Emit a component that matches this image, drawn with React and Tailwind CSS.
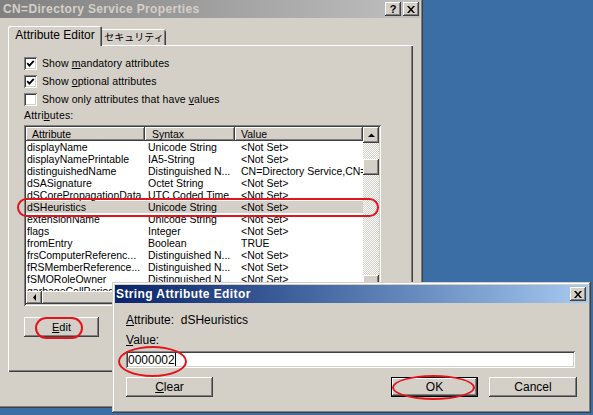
import React from 'react';

// Win2000 style bevels
const raised = 'bg-[#d4d0c8] shadow-[inset_-1px_-1px_#404040,inset_1px_1px_#ffffff,inset_-2px_-2px_#808080,inset_2px_2px_#d4d0c8]';
const sunken = 'shadow-[inset_1px_1px_#808080,inset_-1px_-1px_#ffffff,inset_2px_2px_#404040,inset_-2px_-2px_#d4d0c8]';
const windowFrame = 'bg-[#d4d0c8] shadow-[inset_-1px_-1px_#404040,inset_1px_1px_#d4d0c8,inset_-2px_-2px_#808080,inset_2px_2px_#ffffff]';
const checker = 'bg-[repeating-conic-gradient(#d4d0c8_0_25%,#ffffff_0_50%)] bg-[length:2px_2px]';

const CloseGlyph = () => (
  <svg width="8" height="7" viewBox="0 0 8 7">
    <path d="M0 0h2l2 2.4L6 0h2L5 3.5 8 7H6L4 4.6 2 7H0l3-3.5z" fill="#000" />
  </svg>
);

const TitleButton = ({ children }) => (
  <div className={`w-[16px] h-[14px] flex items-center justify-center ${raised}`}>{children}</div>
);

const Arrow = ({ dir }) => (
  <svg width="7" height="7" viewBox="0 0 7 7">
    {dir === 'up' && <path d="M3.5 1.5L7 5H0z" fill="#000" />}
    {dir === 'down' && <path d="M0 2h7L3.5 5.5z" fill="#000" />}
    {dir === 'left' && <path d="M2 3.5L5 0v7z" fill="#000" />}
  </svg>
);

const Checkbox = ({ checked, children }) => (
  <div className="flex items-center h-[13px] gap-[5px]">
    <div className={`w-[13px] h-[13px] bg-white ${sunken} flex items-center justify-center`}>
      {checked && (
        <svg width="13" height="13" viewBox="0 0 13 13">
          <polyline points="3.2,6.2 5.4,8.6 9.8,3.8" fill="none" stroke="#000" strokeWidth="1.8" />
        </svg>
      )}
    </div>
    <span className="text-[10.5px] leading-[13px] tracking-[0.1px]">{children}</span>
  </div>
);

const rows = [
  ['displayName', 'Unicode String', '<Not Set>'],
  ['displayNamePrintable', 'IA5-String', '<Not Set>'],
  ['distinguishedName', 'Distinguished N...', 'CN=Directory Service,CN=Windows NT'],
  ['dSASignature', 'Octet String', '<Not Set>'],
  ['dSCorePropagationData', 'UTC Coded Time', '<Not Set>'],
  ['dSHeuristics', 'Unicode String', '<Not Set>'],
  ['extensionName', 'Unicode String', '<Not Set>'],
  ['flags', 'Integer', '<Not Set>'],
  ['fromEntry', 'Boolean', 'TRUE'],
  ['frsComputerReferenc...', 'Distinguished N...', '<Not Set>'],
  ['fRSMemberReference...', 'Distinguished N...', '<Not Set>'],
  ['fSMORoleOwner', 'Distinguished N...', '<Not Set>'],
  ['garbageCollPeriod', 'Integer', '<Not Set>'],
];

export default function App() {
  return (
    <div className="relative w-[593px] h-[415px] overflow-hidden bg-[#3a6ea5] text-black font-['Liberation_Sans','Noto_Sans_CJK_JP',sans-serif]">
      {/* Properties window */}
      <div className={`absolute left-[-3px] top-[-3px] w-[426px] h-[411px] p-[3px] flex flex-col ${windowFrame}`}>
        <div className="h-[18px] flex items-center pl-[3px] pr-[1px] bg-linear-to-r from-[#808080] to-[#c0c0c0]">
          <span className="flex-1 text-[12px] font-bold tracking-[0.35px] text-[#d4d0c8] leading-[18px]">
            CN=Directory Service Properties
          </span>
          <TitleButton>
            <span className="text-[11px] font-bold leading-none">?</span>
          </TitleButton>
          <div className="w-[2px]" />
          <TitleButton>
            <CloseGlyph />
          </TitleButton>
        </div>

        <div className="flex-1 pl-[8px] pr-[7px] pt-[8px]">
          {/* tabs */}
          <div className="flex items-end h-[19px]">
            <div className="relative z-10 h-[20px] w-[94px] -mb-[1px] bg-[#d4d0c8] rounded-t-[2px] shadow-[inset_1px_1px_#ffffff,inset_-1px_0_#404040,inset_-2px_0_#808080] flex items-center justify-center pb-[2px] text-[12px]">
              Attribute Editor
            </div>
            <div className="h-[16px] w-[64px] rounded-tr-[2px] shadow-[inset_0_1px_#ffffff,inset_-1px_0_#404040,inset_-2px_0_#808080] flex items-center justify-center text-[10px]">
              セキュリティ
            </div>
          </div>

          {/* tab panel */}
          <div className="h-[327px] px-[16px] pt-[12px] shadow-[inset_1px_1px_#ffffff,inset_-1px_-1px_#404040,inset_-2px_-2px_#808080]">
            <Checkbox checked>
              Show <u>m</u>andatory attributes
            </Checkbox>
            <div className="mt-[5px]">
              <Checkbox checked>
                Show <u>o</u>ptional attributes
              </Checkbox>
            </div>
            <div className="mt-[5px]">
              <Checkbox>
                Show only attributes that have <u>v</u>alues
              </Checkbox>
            </div>
            <div className="mt-[3px] h-[12px] text-[10.5px] leading-[12px] tracking-[0.2px]">
              Attri<u>b</u>utes:
            </div>

            {/* list view */}
            <div className={`mt-[4px] w-[357px] h-[181px] bg-white p-[2px] flex flex-col ${sunken}`}>
              <div className="flex-1 flex min-h-0">
                <div className="flex-1 overflow-hidden">
                  <div className="h-[14px] flex text-[10.5px] leading-[14px] whitespace-nowrap">
                    <div className="w-[119px] pl-[6px] bg-[#d4d0c8] shadow-[inset_-1px_-1px_#404040,inset_1px_1px_#ffffff,inset_-2px_-2px_#808080]">Attribute</div>
                    <div className="w-[90px] pl-[7px] bg-[#d4d0c8] shadow-[inset_-1px_-1px_#404040,inset_1px_1px_#ffffff,inset_-2px_-2px_#808080]">Syntax</div>
                    <div className="flex-1 pl-[6px] bg-[#d4d0c8] shadow-[inset_-1px_-1px_#404040,inset_1px_1px_#ffffff,inset_-2px_-2px_#808080]">Value</div>
                  </div>
                  {rows.map(([a, s, v]) => (
                    <div
                      key={a}
                      className={`h-[12px] flex text-[10.5px] leading-[12px] whitespace-nowrap ${a === 'dSHeuristics' ? 'bg-[#d4d0c8]' : ''}`}
                    >
                      <div className="w-[119px] pl-[1px] overflow-hidden">{a}</div>
                      <div className="w-[90px] pl-[3px] overflow-hidden">{s}</div>
                      <div className="flex-1 pl-[6px] overflow-hidden">{v}</div>
                    </div>
                  ))}
                </div>
                <div className="w-[16px] flex flex-col">
                  <div className={`h-[16px] flex items-center justify-center ${raised}`}>
                    <Arrow dir="up" />
                  </div>
                  <div className={`flex-1 ${checker}`}>
                    <div className={`mt-[16px] h-[16px] ${raised}`} />
                  </div>
                  <div className={`h-[16px] flex items-center justify-center ${raised}`}>
                    <Arrow dir="down" />
                  </div>
                </div>
              </div>
              <div className={`h-[13px] flex ${checker}`}>
                <div className={`w-[16px] flex items-center justify-center ${raised}`}>
                  <Arrow dir="left" />
                </div>
                <div className={`w-[230px] ${raised}`} />
              </div>
            </div>

            <div className={`mt-[11px] w-[75px] h-[20px] flex items-center justify-center text-[11px] ${raised}`}>
              <span><u>E</u>dit</span>
            </div>
          </div>
        </div>
      </div>

      {/* String Attribute Editor dialog */}
      <div className={`absolute left-[112px] top-[282px] w-[479px] h-[131px] p-[3px] flex flex-col ${windowFrame}`}>
        <div className="h-[18px] flex items-center pl-[1px] pr-[2px] bg-linear-to-r from-[#0a246a] to-[#a6caf0]">
          <span className="flex-1 text-[12px] font-bold tracking-[0.4px] text-white leading-[18px]">
            String Attribute Editor
          </span>
          <TitleButton>
            <CloseGlyph />
          </TitleButton>
        </div>
        <div className="px-[11px]">
          <div className="mt-[11px] h-[12px] text-[12px] leading-[12px]">
            <u>A</u>ttribute:&nbsp; dSHeuristics
          </div>
          <div className="mt-[8px] h-[12px] text-[12px] leading-[12px]">
            <u>V</u>alue:
          </div>
          <div className={`mt-[5px] mr-[2px] h-[17px] bg-white pl-[2px] flex items-center text-[12px] ${sunken}`}>
            <span>0000002</span>
            <span className="w-[1px] h-[13px] bg-black" />
          </div>
          <div className="mt-[9px] flex text-[12px]">
            <div className={`w-[87px] h-[20px] flex items-center justify-center ${raised}`}>
              <span><u>C</u>lear</span>
            </div>
            <div className="ml-auto w-[87px] h-[20px] flex items-center justify-center bg-[#d4d0c8] shadow-[inset_0_0_0_1px_#000000,inset_-2px_-2px_#404040,inset_2px_2px_#ffffff,inset_-3px_-3px_#808080]">
              OK
            </div>
            <div className={`ml-[11px] w-[88px] h-[20px] flex items-center justify-center ${raised}`}>
              Cancel
            </div>
          </div>
        </div>
      </div>

      {/* red annotation marks */}
      <div className="absolute left-[17px] top-[198px] w-[362px] h-[19px] border-2 border-[#e4141c] rounded-[10px]" />
      <div className="absolute left-[35px] top-[317px] w-[48px] h-[22px] border-2 border-[#e4141c] rounded-[11px]" />
      <div className="absolute left-[118px] top-[346px] w-[69px] h-[31px] border-2 border-[#e4141c] rounded-[50%]" />
      <div className="absolute left-[392px] top-[375px] w-[83px] h-[25px] border-2 border-[#e4141c] rounded-[50%]" />
    </div>
  );
}
